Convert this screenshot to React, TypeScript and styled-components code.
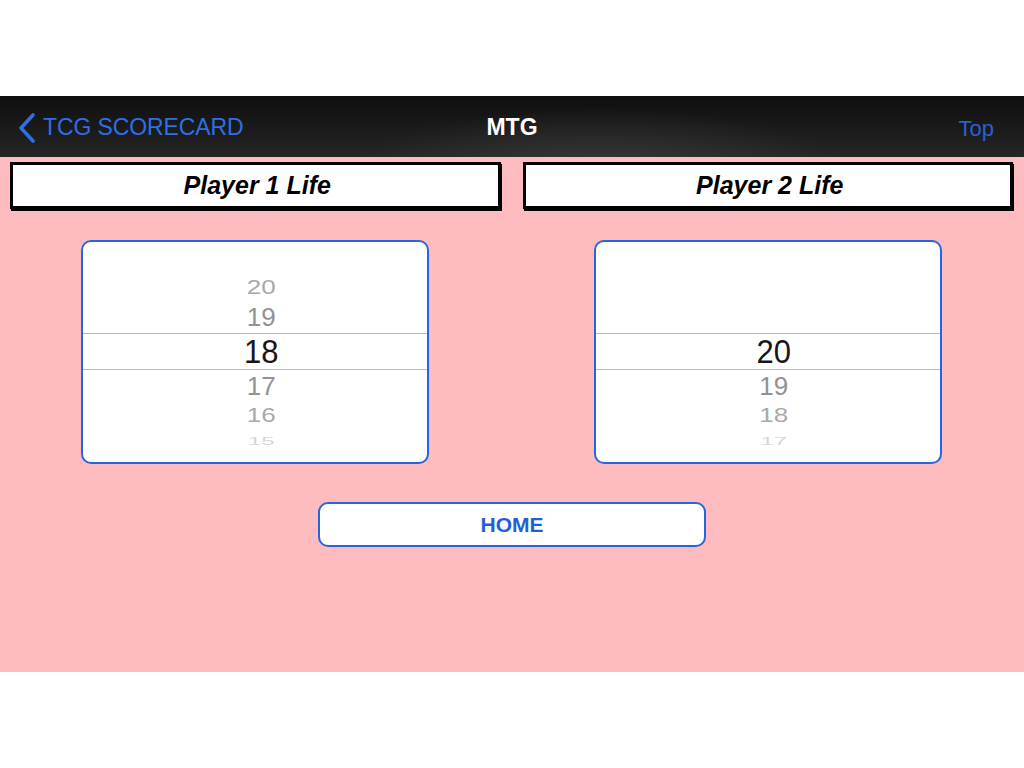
import React from 'react';
import styled, { createGlobalStyle } from 'styled-components';

const GlobalStyle = createGlobalStyle`
  html, body {
    margin: 0;
    padding: 0;
    background: #ffffff;
  }
  body {
    font-family: 'Liberation Sans', Arial, sans-serif;
  }
`;

const BLUE = '#2a64dc';

// wheel rows from -3 (top) to +3 (bottom), the middle one is selected
const ROWS = [
  { offset: -3, height: 24, size: 24, scale: 0.45, color: '#d6d6d6' },
  { offset: -2, height: 28, size: 26, scale: 0.8, color: '#a9a9a9' },
  { offset: -1, height: 32, size: 26, scale: 0.97, color: '#929292' },
  { offset: 0, height: 37, size: 31, scale: 1.05, color: '#161616' },
  { offset: 1, height: 31, size: 26, scale: 0.97, color: '#929292' },
  { offset: 2, height: 28, size: 26, scale: 0.8, color: '#a9a9a9' },
  { offset: 3, height: 24, size: 24, scale: 0.45, color: '#d6d6d6' },
];

const MAX_LIFE = 20;

type LifeWheelProps = {
  value: number;
};

const LifeWheel: React.FC<LifeWheelProps> = ({ value }) => {
  return (
    <WheelBox>
      {ROWS.map((row) => {
        // values count down as the wheel goes further down
        const n = value - row.offset;
        const shown = n <= MAX_LIFE && n >= 0 ? String(n) : '';
        return (
          <WheelRow
            key={row.offset}
            $height={row.height}
            $selected={row.offset === 0}
          >
            <WheelNumber $size={row.size} $scale={row.scale} $color={row.color}>
              {shown}
            </WheelNumber>
          </WheelRow>
        );
      })}
    </WheelBox>
  );
};

const BackChevron = () => (
  <svg width="20" height="30" viewBox="0 0 20 30">
    <path
      d="M16 2 L4 15 L16 28"
      fill="none"
      stroke="#2f6fe2"
      strokeWidth="3.6"
      strokeLinecap="round"
      strokeLinejoin="round"
    />
  </svg>
);

const App: React.FC = () => {
  const players = [
    { name: 'Player 1 Life', life: 18 },
    { name: 'Player 2 Life', life: 20 },
  ];

  return (
    <>
      <GlobalStyle />
      <Page>
        <TopGap />
        <NavBar>
          <BackButton>
            <BackChevron />
            TCG SCORECARD
          </BackButton>
          <NavTitle>MTG</NavTitle>
          <TopButton>Top</TopButton>
        </NavBar>
        <Board>
          <Players>
            {players.map((p) => (
              <PlayerColumn key={p.name}>
                <LifeLabel>{p.name}</LifeLabel>
                <LifeWheel value={p.life} />
              </PlayerColumn>
            ))}
          </Players>
          <HomeButton>HOME</HomeButton>
        </Board>
      </Page>
    </>
  );
};

export default App;

const Page = styled.div`
  width: 1024px;
  height: 768px;
  display: flex;
  flex-direction: column;
  background: #ffffff;
  overflow: hidden;
`;

const TopGap = styled.div`
  height: 96px;
  flex-shrink: 0;
`;

const NavBar = styled.div`
  height: 61px;
  flex-shrink: 0;
  display: grid;
  grid-template-columns: 1fr auto 1fr;
  align-items: center;
  background:
    radial-gradient(ellipse 240px 60px at 600px 72px, rgba(62, 62, 62, 0.7), rgba(40, 40, 40, 0) 100%),
    linear-gradient(#0f0f0f, #1c1c1c 60%, #262626);
`;

const BackButton = styled.div`
  display: flex;
  align-items: center;
  gap: 6px;
  margin-left: 17px;
  color: #2f6fe2;
  font-size: 23px;
  letter-spacing: -0.1px;
  justify-self: start;
  padding-top: 2px;
`;

const NavTitle = styled.div`
  color: #ffffff;
  font-size: 23px;
  font-weight: 700;
  padding-top: 2px;
`;

const TopButton = styled.div`
  color: #2c5fd2;
  font-size: 22px;
  justify-self: end;
  margin-right: 30px;
  padding-top: 4px;
`;

const Board = styled.div`
  height: 515px;
  flex-shrink: 0;
  background: #febcc0;
  display: flex;
  flex-direction: column;
  align-items: center;
`;

const Players = styled.div`
  align-self: stretch;
  display: grid;
  grid-template-columns: 1fr 1fr;
  column-gap: 22px;
  padding: 5px 11px 0 10px;
`;

const PlayerColumn = styled.div`
  display: flex;
  flex-direction: column;
  align-items: center;
  gap: 31px;
`;

const LifeLabel = styled.div`
  align-self: stretch;
  height: 41px;
  background: #ffffff;
  border: 3px solid #000000;
  box-shadow: 1px 2px 0 #000000;
  display: flex;
  align-items: center;
  justify-content: center;
  padding-left: 4px;
  font-size: 25px;
  font-weight: 700;
  font-style: italic;
  color: #000000;
`;

const WheelBox = styled.div`
  width: 348px;
  height: 224px;
  box-sizing: border-box;
  border: 2px solid ${BLUE};
  border-radius: 10px;
  background: #ffffff;
  display: flex;
  flex-direction: column;
  padding-top: 7px;
  overflow: hidden;
`;

const WheelRow = styled.div<{ $height: number; $selected: boolean }>`
  height: ${(p) => p.$height}px;
  flex-shrink: 0;
  box-sizing: border-box;
  display: flex;
  align-items: center;
  justify-content: center;
  padding-left: 12px;
  border-top: ${(p) => (p.$selected ? '1px solid #b9b9c2' : 'none')};
  border-bottom: ${(p) => (p.$selected ? '1px solid #b9b9c2' : 'none')};
`;

const WheelNumber = styled.span<{ $size: number; $scale: number; $color: string }>`
  font-size: ${(p) => p.$size}px;
  color: ${(p) => p.$color};
  transform: scaleY(${(p) => p.$scale});
  line-height: 1;
`;

const HomeButton = styled.button`
  margin-top: 38px;
  width: 388px;
  height: 45px;
  border: 2px solid ${BLUE};
  border-radius: 10px;
  background: #ffffff;
  color: #1f5fd6;
  font-family: 'Liberation Sans', Arial, sans-serif;
  font-size: 21px;
  font-weight: 700;
  cursor: pointer;
`;
